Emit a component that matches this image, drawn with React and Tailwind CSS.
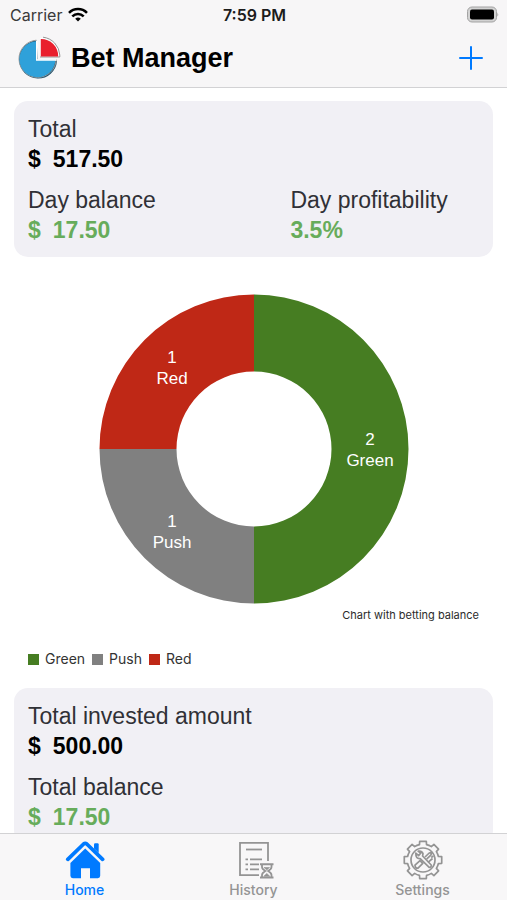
import React from "react";

const outcomes = [
  { name: "Green", swatch: "bg-[#467d22]" },
  { name: "Push", swatch: "bg-[#808080]" },
  { name: "Red", swatch: "bg-[#bf2816]" },
];

function WifiIcon() {
  return (
    <svg viewBox="0 0 20 16" className="h-4 w-5" fill="none" stroke="#000" strokeWidth="2.6" aria-hidden="true">
      <path d="M1 5.8 C6 0.8 14 0.8 19 5.8" />
      <path d="M4.3 9.4 C7.6 6.2 12.4 6.2 15.7 9.4" />
      <path d="M10 14.6 L7.2 11.8 Q10 9.4 12.8 11.8 Z" fill="#000" stroke="none" />
    </svg>
  );
}

function BatteryIcon() {
  return (
    <svg viewBox="0 0 34 18" className="h-[18px] w-[34px]" aria-hidden="true">
      <rect x="2.5" y="1" width="29" height="15" rx="4.5" fill="#d2d2d2" stroke="#a3a3a3" />
      <rect x="5" y="3.5" width="24" height="10" rx="2" fill="#000" />
      <path d="M32.4 6.5 Q34 8.5 32.4 10.5 Z" fill="#a3a3a3" />
    </svg>
  );
}

function Logo() {
  return (
    <svg viewBox="0 0 44 44" className="size-11" aria-hidden="true">
      <path d="M19.5 4.6 A19 19 0 1 0 40 25 L21 24 Z" fill="#27566f" />
      <path d="M19.3 4.2 A18.6 18.6 0 1 0 39.2 23.6" fill="none" stroke="#9b9b9b" strokeWidth="1" />
      <path d="M19.8 5.2 A18 18 0 1 0 38.4 23.8 L19.8 23.8 Z" fill="#2fa1da" />
      <path d="M19.8 5 V24 H39" fill="none" stroke="#fff" strokeWidth="1.6" />
      <path d="M23 2 A20 20 0 0 1 43 20.5 H40 L24 4 Z" fill="#fff" />
      <path d="M26 1.2 A19 19 0 0 1 42.8 19 V21 H23" fill="none" stroke="#969696" strokeWidth="1" />
      <path d="M23.8 3 A17 17 0 0 1 41.2 20.4 H23.8 Z" fill="#e91f2d" />
    </svg>
  );
}

function HomeIcon() {
  return (
    <svg viewBox="0 0 40 40" className="size-10" fill="#007aff" aria-hidden="true">
      <path d="M2.8 19.3 L18.6 4 Q20.2 2.7 21.8 4 L37.6 19.3" fill="none" stroke="#007aff" strokeWidth="3.8" strokeLinecap="round" strokeLinejoin="round" />
      <path d="M29 4.4 Q29 3.2 30.2 3.2 H32.5 Q33.7 3.2 33.7 4.4 V13 L29 8.4 Z" />
      <path d="M20.2 8.6 L35.2 23 V35.8 Q35.2 38.2 32.8 38.2 H25 V28.2 H16 V38.2 H7.8 Q5.4 38.2 5.4 35.8 V23 Z" />
    </svg>
  );
}

function HistoryIcon() {
  return (
    <svg viewBox="-1 0 40 40" className="size-10" fill="none" stroke="#949494" strokeWidth="1.8" aria-hidden="true">
      <path d="M33 21 V2.8 H5 V35.2 H24" />
      <path d="M11 9.5 H27" />
      <path d="M10.5 19.3 H13 M15 19.3 H27 M10.5 24.3 H13 M15 24.3 H24 M10.5 29.3 H13 M15 29.3 H24" />
      <path d="M25 24.2 H38.5 M25 37.6 H38.5" strokeWidth="2" />
      <path d="M27 25 V27 Q27 29 30.3 31 Q27 33 27 35 V37 M36.5 25 V27 Q36.5 29 33.2 31 Q36.5 33 36.5 35 V37" />
      <path d="M29 27.5 H34.5 L31.8 30 Z M28.8 36.3 L31.8 33.4 L34.8 36.3 Z" fill="#949494" strokeWidth="0.6" />
    </svg>
  );
}

const teeth = [0, 45, 90, 135, 180, 225, 270, 315];

function polar(radius, degrees) {
  const a = (degrees * Math.PI) / 180;
  return `${(20 + radius * Math.cos(a)).toFixed(2)} ${(20 + radius * Math.sin(a)).toFixed(2)}`;
}

const gearOutline =
  teeth
    .map(
      (t, i) =>
        `${i ? "L" : "M"}${polar(15.8, t - 13)} L${polar(19, t - 10)} L${polar(19, t + 10)} L${polar(15.8, t + 13)} A15.8 15.8 0 0 1 ${polar(15.8, t + 32)}`
    )
    .join(" ") + " Z";

function SettingsIcon() {
  return (
    <svg viewBox="0 0 40 40" className="size-10" fill="none" stroke="#949494" strokeWidth="1.7" strokeLinejoin="round" aria-hidden="true">
      <path d={gearOutline} />
      <circle cx="20" cy="20" r="12" />
      <path d="M12.8 13 L15.6 15.6 L17.8 13 L15.2 11.2 Q18.8 10.6 20 13.6 L19.6 16 L28.2 25 Q28.6 27.4 26.2 27.4 L17.2 18.6 Q12.6 19.2 12.8 13 Z" />
      <path d="M22 17 L26.2 13 L28.8 12.4 L27.8 15.2 L23.6 19.2" />
      <path d="M17 20.6 L12 25.2 Q12.2 28.4 15 28.2 L19.8 23.4 Z" />
      <path d="M28.2 17.5 L30.4 16 M25 22.4 L29.5 18.5" />
    </svg>
  );
}

function Stat({ label, value, currency, positive }) {
  return (
    <div className="leading-[30px]">
      <dt className="text-[23px] text-[#303036]">{label}</dt>
      <dd className={positive ? "flex gap-3 text-[23px] font-bold text-[#67ac5b]" : "flex gap-3 text-[23px] font-bold text-black"}>
        {currency && <span>$</span>}
        <span>{value}</span>
      </dd>
    </div>
  );
}

function Card({ children }) {
  return (
    <dl className="mx-3.5 grid grid-cols-[263fr_189fr] gap-y-[11px] rounded-[14px] bg-[#f1f0f5] px-3.5 pt-[13px] pb-3">
      {children}
    </dl>
  );
}

function SliceLabel({ x, y, count, name }) {
  return (
    <text x={x} y={y} fill="#fff" fontSize="17" textAnchor="middle">
      {count}
      <tspan x={x} dy="21">{name}</tspan>
    </text>
  );
}

function BalanceChart() {
  return (
    <figure className="flex flex-col px-7 pt-[37px] pb-[21px]">
      <svg viewBox="0 0 310 310" className="w-[310px] self-center" role="img" aria-label="Chart with betting balance">
        <path d="M155 0.5 A154.5 154.5 0 0 1 155 309.5 V232.5 A77.5 77.5 0 0 0 155 77.5 Z" fill="#467d22" />
        <path d="M155 309.5 A154.5 154.5 0 0 1 0.5 155 H77.5 A77.5 77.5 0 0 0 155 232.5 Z" fill="#808080" />
        <path d="M0.5 155 A154.5 154.5 0 0 1 155 0.5 V77.5 A77.5 77.5 0 0 0 77.5 155 Z" fill="#bf2816" />
        <SliceLabel x={73} y={69} count="1" name="Red" />
        <SliceLabel x={73} y={233} count="1" name="Push" />
        <SliceLabel x={271} y={151} count="2" name="Green" />
      </svg>
      <figcaption className="mt-[3px] self-end font-[Inter,sans-serif] text-[11px] leading-4 text-[#2b2b2b]">
        Chart with betting balance
      </figcaption>
      <ul className="mt-7 flex gap-[7px] font-[Inter,sans-serif] text-[14px] leading-4 text-[#333]">
        {outcomes.map((o) => (
          <li key={o.name} className="flex items-center gap-1.5">
            <span className={`size-[11px] ${o.swatch}`} />
            {o.name}
          </li>
        ))}
      </ul>
    </figure>
  );
}

const tabs = [
  { name: "Home", Icon: HomeIcon, active: true },
  { name: "History", Icon: HistoryIcon },
  { name: "Settings", Icon: SettingsIcon },
];

export default function App() {
  return (
    <div className="flex h-screen flex-col overflow-hidden bg-white font-['Liberation_Sans',Arial,sans-serif]">
      <header className="shrink-0 border-b border-[#d2d2d4] bg-[#f7f6f7]">
        <div className="grid h-[30px] grid-cols-3 items-center pr-2 pl-2.5 font-[Inter,sans-serif] leading-5">
          <div className="flex items-center gap-1.5 text-[16px] text-[#3a3a3a]">
            Carrier
            <WifiIcon />
          </div>
          <time className="text-center text-[16px] font-semibold text-[#1c1c1c]">7:59 PM</time>
          <div className="flex justify-end">
            <BatteryIcon />
          </div>
        </div>
        <div className="flex h-[57px] items-center gap-2.5 pr-[22px] pb-px pl-[17px]">
          <Logo />
          <h1 className="flex-1 text-[27px] leading-8 font-bold text-black">Bet Manager</h1>
          <button type="button" aria-label="Add bet" className="flex size-7 items-center justify-center text-[#007aff]">
            <svg viewBox="0 0 24 24" className="size-6" stroke="currentColor" strokeWidth="2" strokeLinecap="round" aria-hidden="true">
              <path d="M12 1 V23 M1 12 H23" />
            </svg>
          </button>
        </div>
      </header>

      <main className="min-h-0 flex-1 overflow-y-auto pt-[13px] [scrollbar-width:none]">
        <Card>
          <div className="col-span-2">
            <Stat label="Total" currency value="517.50" />
          </div>
          <Stat label="Day balance" currency value="17.50" positive />
          <Stat label="Day profitability" value="3.5%" positive />
        </Card>
        <BalanceChart />
        <Card>
          <div className="col-span-2">
            <Stat label="Total invested amount" currency value="500.00" />
          </div>
          <Stat label="Total balance" currency value="17.50" positive />
        </Card>
      </main>

      <nav className="grid shrink-0 grid-cols-3 border-t border-[#d2d2d4] bg-[#f8f7f8] font-[Inter,sans-serif]">
        {tabs.map(({ name, Icon, active }) => (
          <a
            key={name}
            href={`#${name.toLowerCase()}`}
            aria-current={active ? "page" : undefined}
            className={
              active
                ? "flex flex-col items-center gap-0.5 pt-1.5 pb-0.5 text-[14px] leading-4 font-medium text-[#007aff]"
                : "flex flex-col items-center gap-0.5 pt-1.5 pb-0.5 text-[14px] leading-4 font-medium text-[#949494]"
            }
          >
            <Icon />
            {name}
          </a>
        ))}
      </nav>
    </div>
  );
}
